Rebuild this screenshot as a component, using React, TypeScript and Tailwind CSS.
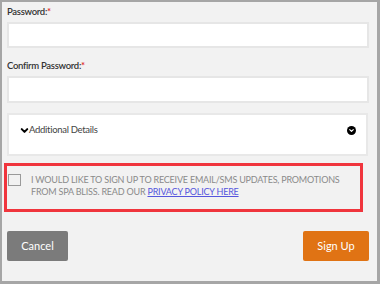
import { ChevronDown } from "lucide-react"

function Label({ text, className }: { text: string; className?: string }) {
  return (
    <div className={`leading-[14px] text-[9.5px] font-semibold tracking-[-0.3px] text-[#333333] ${className ?? ""}`}>
      {text}
      <span className="text-[#e0262b]">*</span>
    </div>
  )
}

export default function App() {
  return (
    <div
      className="w-[380px] h-[284px] border-t-2 border-l-2 border-r-[3px] border-b-[3px] border-[#a6a6a6] bg-[#f2f2f2] pl-[5px] pr-[7px] flex flex-col"
      style={{ fontFamily: "Lato, 'Liberation Sans', sans-serif" }}
    >
      <Label text="Password:" className="pt-[3px] mb-[3px]" />
      <div className="h-[26px] w-[362px] bg-white border-2 border-[#e6e6e6]" />

      <Label text="Confirm Password:" className="mt-[11px] mb-[3px]" />
      <div className="h-[27px] w-[362px] bg-white border-2 border-[#e6e6e6]" />

      {/* Additional details */}
      <div className="mt-[10px] h-[43px] w-[361px] bg-white border-2 border-[#e8e8e8] flex items-start justify-between pl-[10px] pr-[10px] pt-[8px]">
        <div className="flex items-center text-[9.5px] tracking-[-0.3px] text-[#444444] leading-[14px]">
          <ChevronDown className="w-[11px] h-[11px] text-black -mr-[1px]" strokeWidth={4.5} />
          <span>Additional Details</span>
        </div>
        <div className="mt-[3px] w-[9px] h-[9px] rounded-full bg-black flex items-center justify-center">
          <ChevronDown className="w-[7px] h-[7px] text-white" strokeWidth={4} />
        </div>
      </div>

      {/* Newsletter opt-in */}
      <div className="mt-[7px] -ml-[3px] h-[49px] w-[359px] border-[3px] border-[#f0353d] flex items-start pl-[1px] pt-[8px]">
        <div className="w-[13px] h-[12px] border border-[#9a9a9a] bg-[#f2f2f2] shrink-0" />
        <p className="ml-[10px] text-[9px] leading-[12px] tracking-[-0.2px] text-[#8a8a8a] uppercase whitespace-nowrap">
          I would like to sign up to receive email/sms updates, promotions
          <br />
          from spa bliss. Read our{" "}
          <a href="#" className="text-[#5555dd] underline">Privacy Policy Here</a>
        </p>
      </div>

      {/* Actions */}
      <div className="mt-[19px] flex justify-between w-[362px]">
        <button className="h-[30px] w-[61px] rounded-[2px] bg-[#7b7b7b] text-white text-[11px]">Cancel</button>
        <button className="h-[30px] w-[66px] rounded-[2px] bg-[#e07314] text-white text-[11px]">Sign Up</button>
      </div>
    </div>
  )
}
